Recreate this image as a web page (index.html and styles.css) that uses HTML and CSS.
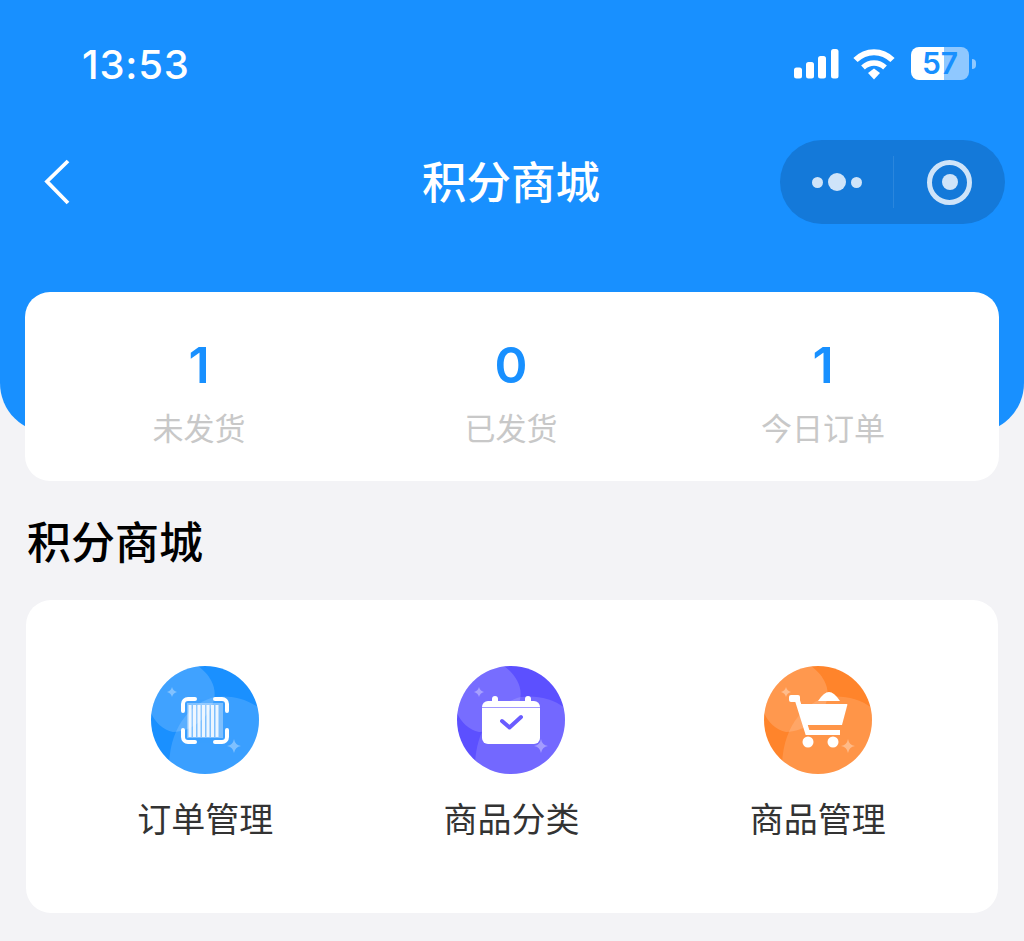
FILE: index.html
```html
<!DOCTYPE html>
<html lang="zh">
<head>
<meta charset="utf-8">
<title>积分商城</title>
<link rel="stylesheet" href="styles.css">
</head>
<body>
<header class="hero">
  <div class="status">
    <span class="time">13:53</span>
    <div class="status-icons">
      <svg class="signal" width="45" height="30" viewBox="0 0 45 30"><rect x="0" y="18.500" width="8" height="11" rx="2.500"/><rect x="12" y="13" width="8" height="16.500" rx="2.500"/><rect x="24" y="7" width="8" height="22.500" rx="2.500"/><rect x="37" y="0" width="7.500" height="29.500" rx="2.500"/></svg>
      <svg class="wifi" width="42" height="33" viewBox="0 0 42 33"><path d="M2.500 13C13 2.500 29 2.500 39.500 13" fill="none" stroke="#fff" stroke-width="6"/><path d="M10 20.500C16.500 14.500 25.500 14.500 32 20.500" fill="none" stroke="#fff" stroke-width="5.500"/><path d="M15 26L21 21.500 27 26 21 32.500Z" fill="#fff"/></svg>
      <div class="battery">
        <div class="battery-body"><span class="battery-num">57</span></div>
        <i class="battery-tip"></i>
      </div>
    </div>
  </div>
  <nav class="nav">
    <svg class="back" width="30" height="46" viewBox="0 0 30 46"><path d="M26 2L5 22.500 26 44" fill="none" stroke="#fff" stroke-width="3.800"/></svg>
    <h1 class="nav-title">积分商城</h1>
    <div class="capsule">
      <div class="capsule-dots"><i class="dot"></i><i class="dot dot-big"></i><i class="dot"></i></div>
      <i class="capsule-line"></i>
      <div class="capsule-target"><i class="target-core"></i></div>
    </div>
  </nav>
</header>

<main class="content">
  <section class="stats">
    <div class="stat"><strong class="stat-num">1</strong><span class="stat-label">未发货</span></div>
    <div class="stat"><strong class="stat-num">0</strong><span class="stat-label">已发货</span></div>
    <div class="stat"><strong class="stat-num">1</strong><span class="stat-label">今日订单</span></div>
  </section>

  <h2 class="section-title">积分商城</h2>

  <section class="menu">
    <div class="menu-item">
      <svg class="menu-icon" width="108" height="108" viewBox="0 0 108 108">
        <defs><clipPath id="c1"><circle cx="54" cy="54" r="54"/></clipPath></defs>
        <g clip-path="url(#c1)">
          <rect width="108" height="108" fill="#1a90ff"/>
          <path class="wash-a" d="M47 0C58 8 66 20 63 34 58 52 40 66 22 66 12 64 4 56 0 47V0Z"/>
          <path class="wash-b" d="M108 42C95 32 78 29 64 31 42 36 16 60 18 108H108Z"/>
          <path class="spark" d="M21 21Q22 25 26 26 22 27 21 31 20 27 16 26 20 25 21 21ZM83 73Q84 79 90 80 84 81 83 87 82 81 76 80 82 79 83 73Z"/>
          <rect x="36" y="37" width="36" height="35" fill="#fff" opacity=".35"/>
          <path d="M32 45v-7a5 5 0 0 1 5-5h7M64 33h7a5 5 0 0 1 5 5v7M76 64v7a5 5 0 0 1-5 5h-7M44 76h-7a5 5 0 0 1-5-5v-7" fill="none" stroke="#fff" stroke-width="4" stroke-linecap="round"/>
          <path d="M39 39v32M43.500 39v32M48 39v32M52.500 39v32M57 39v32M61.500 39v32M66 39v32" stroke="#fff" stroke-width="3" opacity=".85"/>
        </g>
      </svg>
      <span class="menu-label">订单管理</span>
    </div>
    <div class="menu-item">
      <svg class="menu-icon" width="108" height="108" viewBox="0 0 108 108">
        <defs><clipPath id="c2"><circle cx="54" cy="54" r="54"/></clipPath></defs>
        <g clip-path="url(#c2)">
          <rect width="108" height="108" fill="#5c50ff"/>
          <path class="wash-a" d="M47 0C58 8 66 20 63 34 58 52 40 66 22 66 12 64 4 56 0 47V0Z"/>
          <path class="wash-b" d="M108 42C95 32 78 29 64 31 42 36 16 60 18 108H108Z"/>
          <path class="spark" d="M22 21Q23 25 27 26 23 27 22 31 21 27 17 26 21 25 22 21ZM84 73Q85 79 91 80 85 81 84 87 83 81 77 80 83 79 84 73Z"/>
          <rect x="25" y="35" width="58" height="43" rx="6" fill="#fff"/>
          <rect x="35" y="30" width="6" height="10" rx="3" fill="#fff"/>
          <rect x="68" y="30" width="6" height="10" rx="3" fill="#fff"/>
          <path d="M25 41.500H83" stroke="#7c70ff" stroke-width="1" opacity=".7"/>
          <path d="M45 55l7.500 6.500L64 51" fill="none" stroke="#6a5cff" stroke-width="4" stroke-linecap="round" stroke-linejoin="round"/>
        </g>
      </svg>
      <span class="menu-label">商品分类</span>
    </div>
    <div class="menu-item">
      <svg class="menu-icon" width="108" height="108" viewBox="0 0 108 108">
        <defs><clipPath id="c3"><circle cx="54" cy="54" r="54"/></clipPath></defs>
        <g clip-path="url(#c3)">
          <rect width="108" height="108" fill="#ff842b"/>
          <path class="wash-a" d="M47 0C58 8 66 20 63 34 58 52 40 66 22 66 12 64 4 56 0 47V0Z"/>
          <path class="wash-b" d="M108 42C95 32 78 29 64 31 42 36 16 60 18 108H108Z"/>
          <path class="spark" d="M22 21Q23 25 27 26 23 27 22 31 21 27 17 26 21 25 22 21ZM84 73Q85 79 91 80 85 81 84 87 83 81 77 80 83 79 84 73Z"/>
          <path d="M54 35Q60 26 65 26 70 26 76 35Z" fill="#fff"/>
          <rect x="25" y="29" width="11" height="7" rx="2" fill="#fff"/>
          <path d="M33 33L43.500 66.500H76" fill="none" stroke="#fff" stroke-width="5"/>
          <path d="M36 38H83Q83.500 38 83.300 39L78 59H41Z" fill="#fff"/>
          <circle cx="44" cy="76" r="5.500" fill="#fff"/>
          <circle cx="69" cy="76" r="5.500" fill="#fff"/>
        </g>
      </svg>
      <span class="menu-label">商品管理</span>
    </div>
  </section>
</main>
</body>
</html>
```
FILE: styles.css
```css
* { box-sizing: border-box; }
html, body { margin: 0; padding: 0; }
body {
  width: 1024px;
  height: 941px;
  overflow: hidden;
  background: #f3f3f6;
  font-family: "Noto Sans CJK SC", Inter, "Liberation Sans", sans-serif;
}
.hero {
  height: 433px;
  background: #1890ff;
  border-radius: 0 0 50px 50px;
  color: #fff;
}
.status {
  height: 131px;
  padding: 42px 48px 0 82px;
  display: flex;
  justify-content: space-between;
  align-items: flex-start;
}
.time {
  font-family: Inter, "Liberation Sans", sans-serif;
  font-size: 40px;
  line-height: 46px;
  font-weight: 500;
  letter-spacing: .8px;
}
.status-icons {
  display: flex;
  align-items: center;
  gap: 14px;
  margin-top: 5px;
}
.signal { fill: #fff; }
.wifi { margin-right: 2px; }
.battery {
  display: flex;
  align-items: center;
  gap: 3px;
}
.battery-body {
  width: 58px;
  height: 33px;
  border-radius: 8px;
  background: linear-gradient(90deg, #fff 0 57%, #8fc8ff 57% 100%);
  display: flex;
  align-items: center;
  justify-content: center;
}
.battery-num {
  font-family: Inter, "Liberation Sans", sans-serif;
  font-size: 30px;
  font-weight: 600;
  color: #1890ff;
  line-height: 33px;
}
.battery-tip {
  width: 4px;
  height: 10px;
  border-radius: 0 5px 5px 0;
  background: #8fc8ff;
}
.nav {
  position: relative;
  height: 84px;
  margin-top: 9px;
  padding: 0 19px 0 42px;
  display: flex;
  align-items: center;
  justify-content: space-between;
}
.back { display: block; }
.nav-title {
  position: absolute;
  left: 0;
  right: 2px;
  top: 15px;
  margin: 0;
  text-align: center;
  font-size: 44.500px;
  line-height: 50px;
  font-weight: 500;
}
.capsule {
  width: 225px;
  height: 84px;
  border-radius: 42px;
  background: #1479d9;
  display: flex;
  align-items: center;
}
.capsule-dots {
  width: 113px;
  display: flex;
  justify-content: center;
  align-items: center;
  gap: 5px;
}
.dot {
  width: 11px;
  height: 11px;
  border-radius: 50%;
  background: #cfe4f9;
}
.dot-big { width: 18px; height: 18px; }
.capsule-line {
  width: 1px;
  height: 52px;
  background: #2a86dd;
}
.capsule-target {
  width: 45px;
  height: 45px;
  margin-left: 33px;
  border: 5px solid #cfe4f9;
  border-radius: 50%;
  display: flex;
  align-items: center;
  justify-content: center;
}
.target-core {
  width: 16px;
  height: 16px;
  border-radius: 50%;
  background: #cfe4f9;
}
.content {
  margin-top: -141px;
  padding: 0 25px;
}
.stats {
  height: 189px;
  padding: 43px 19px 0;
  background: #fff;
  border-radius: 25px;
  display: grid;
  grid-template-columns: repeat(3, 1fr);
}
.stat {
  display: flex;
  flex-direction: column;
  align-items: center;
}
.stat-num {
  font-family: Inter, "Liberation Sans", sans-serif;
  font-size: 50px;
  line-height: 60px;
  font-weight: 600;
  color: #1890ff;
  margin-left: -2px;
}
.stat-label {
  margin-top: 12px;
  margin-left: -2px;
  font-size: 31px;
  line-height: 40px;
  color: #c8c8c8;
}
.section-title {
  margin: 32px 0 33px 2px;
  font-size: 44px;
  line-height: 54px;
  font-weight: 500;
  color: #000;
}
.menu {
  height: 313px;
  margin: 0 1px;
  padding: 66px 27px 0 26px;
  background: #fff;
  border-radius: 25px;
  display: grid;
  grid-template-columns: repeat(3, 1fr);
  align-content: start;
}
.menu-item {
  display: flex;
  flex-direction: column;
  align-items: center;
}
.menu-icon { display: block; }
.menu-label {
  margin-top: 21px;
  font-size: 34px;
  line-height: 46px;
  color: #333;
}
.wash-a { fill: #fff; opacity: .17; }
.wash-b { fill: #fff; opacity: .14; }
.spark { fill: #fff; opacity: .35; }
```
